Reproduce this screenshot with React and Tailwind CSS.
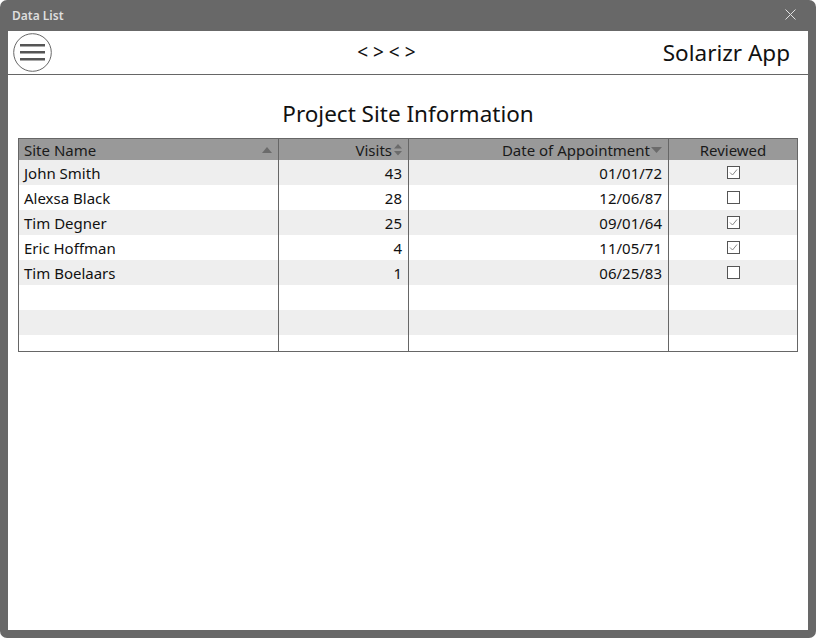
const rows = [
  { name: "John Smith", visits: "43", date: "01/01/72", reviewed: true },
  { name: "Alexsa Black", visits: "28", date: "12/06/87", reviewed: false },
  { name: "Tim Degner", visits: "25", date: "09/01/64", reviewed: true },
  { name: "Eric Hoffman", visits: "4", date: "11/05/71", reviewed: true },
  { name: "Tim Boelaars", visits: "1", date: "06/25/83", reviewed: false },
  null,
  null,
];

function Check({ checked }) {
  return (
    <svg width="13" height="13" viewBox="0 0 13 13">
      <rect x="0.5" y="0.5" width="12" height="12" fill="white" stroke="#555" />
      {checked && <path d="M3 6.5 L5.5 9 L10 3.5" fill="none" stroke="#888" strokeWidth="1" />}
    </svg>
  );
}

function App() {
  return (
    <div className="w-[816px] h-[638px] bg-white" style={{ fontFamily: '"Segoe UI", "Noto Sans", sans-serif' }}>
      <div className="w-full h-full bg-[#686868] rounded-[7px] flex flex-col px-[8px] pb-[8px]">
        <div className="h-[31px] flex items-center justify-between pl-[4px] pr-[12px]">
          <span className="text-[12px] font-semibold text-[#dedede]">Data List</span>
          <svg width="11" height="11" viewBox="0 0 11 11" className="-mt-[3px]">
            <path d="M0.5 0.5 L10.5 10.5 M10.5 0.5 L0.5 10.5" stroke="#e0e0e0" strokeWidth="1" />
          </svg>
        </div>
        <div className="flex-1 bg-white flex flex-col">
          <div className="h-[44px] border-b border-[#666] flex items-center pl-[5px] pr-[18px]">
            <svg width="39" height="39" viewBox="0 0 39 39">
              <circle cx="19.5" cy="19.5" r="18.8" fill="white" stroke="#666" strokeWidth="1" />
              <rect x="7" y="11" width="25" height="2.5" fill="#555" />
              <rect x="7" y="18" width="25" height="2.5" fill="#555" />
              <rect x="7" y="25" width="25" height="2.5" fill="#555" />
            </svg>
            <div className="flex-1 text-center text-[19px] text-[#111] pl-[58px]">&lt; &gt; &lt; &gt;</div>
            <div className="text-[22.5px] text-[#111]">Solarizr App</div>
          </div>
          <div className="text-center text-[22.5px] text-[#111] mt-[23px] leading-[32px]">Project Site Information</div>
          <div className="mx-[10px] mt-[8px] border border-[#666] h-[214px] overflow-hidden">
            <div className="grid grid-cols-[260px_130px_260px_1fr] h-[21px] bg-[#999] text-[15px] text-[#1a1a1a] leading-[21px]">
              <div className="flex items-center justify-between pl-[5px] pr-[6px] border-r border-[#666]">
                <span className="mt-[1px]">Site Name</span>
                <svg width="10" height="6" viewBox="0 0 10 6"><path d="M5 0 L10 6 L0 6 Z" fill="#6b6b6b" /></svg>
              </div>
              <div className="flex items-center justify-end pr-[5px] border-r border-[#666]">
                <span className="mt-[1px]">Visits</span>
                <svg width="10" height="12" viewBox="0 0 10 12" className="ml-[1px]">
                  <path d="M5 0 L9 4.5 L1 4.5 Z M1 7 L9 7 L5 11.5 Z" fill="#6b6b6b" />
                </svg>
              </div>
              <div className="flex items-center justify-end pr-[6px] border-r border-[#666]">
                <span className="mt-[1px]">Date of Appointment</span>
                <svg width="11" height="6" viewBox="0 0 11 6" className="ml-[1px]"><path d="M0 0 L11 0 L5.5 6 Z" fill="#6b6b6b" /></svg>
              </div>
              <div className="flex items-center justify-center">
                <span className="mt-[1px]">Reviewed</span>
              </div>
            </div>
            {rows.map((r, i) => (
              <div key={i} className={`grid grid-cols-[260px_130px_260px_1fr] h-[25px] text-[15px] text-[#111] leading-[25px] ${i % 2 === 0 ? "bg-[#eeeeee]" : "bg-white"}`}>
                <div className="pl-[5px] pt-[1px] border-r border-[#666]">{r && r.name}</div>
                <div className="text-right pr-[6px] pt-[1px] border-r border-[#666]">{r && r.visits}</div>
                <div className="text-right pr-[6px] pt-[1px] border-r border-[#666]">{r && r.date}</div>
                <div className="flex items-center justify-center pb-[2px]">{r && <Check checked={r.reviewed} />}</div>
              </div>
            ))}
            <div className="grid grid-cols-[260px_130px_260px_1fr] h-[25px] bg-white">
              <div className="border-r border-[#666]"></div>
              <div className="border-r border-[#666]"></div>
              <div className="border-r border-[#666]"></div>
              <div></div>
            </div>
          </div>
        </div>
      </div>
    </div>
  );
}

export default App;
